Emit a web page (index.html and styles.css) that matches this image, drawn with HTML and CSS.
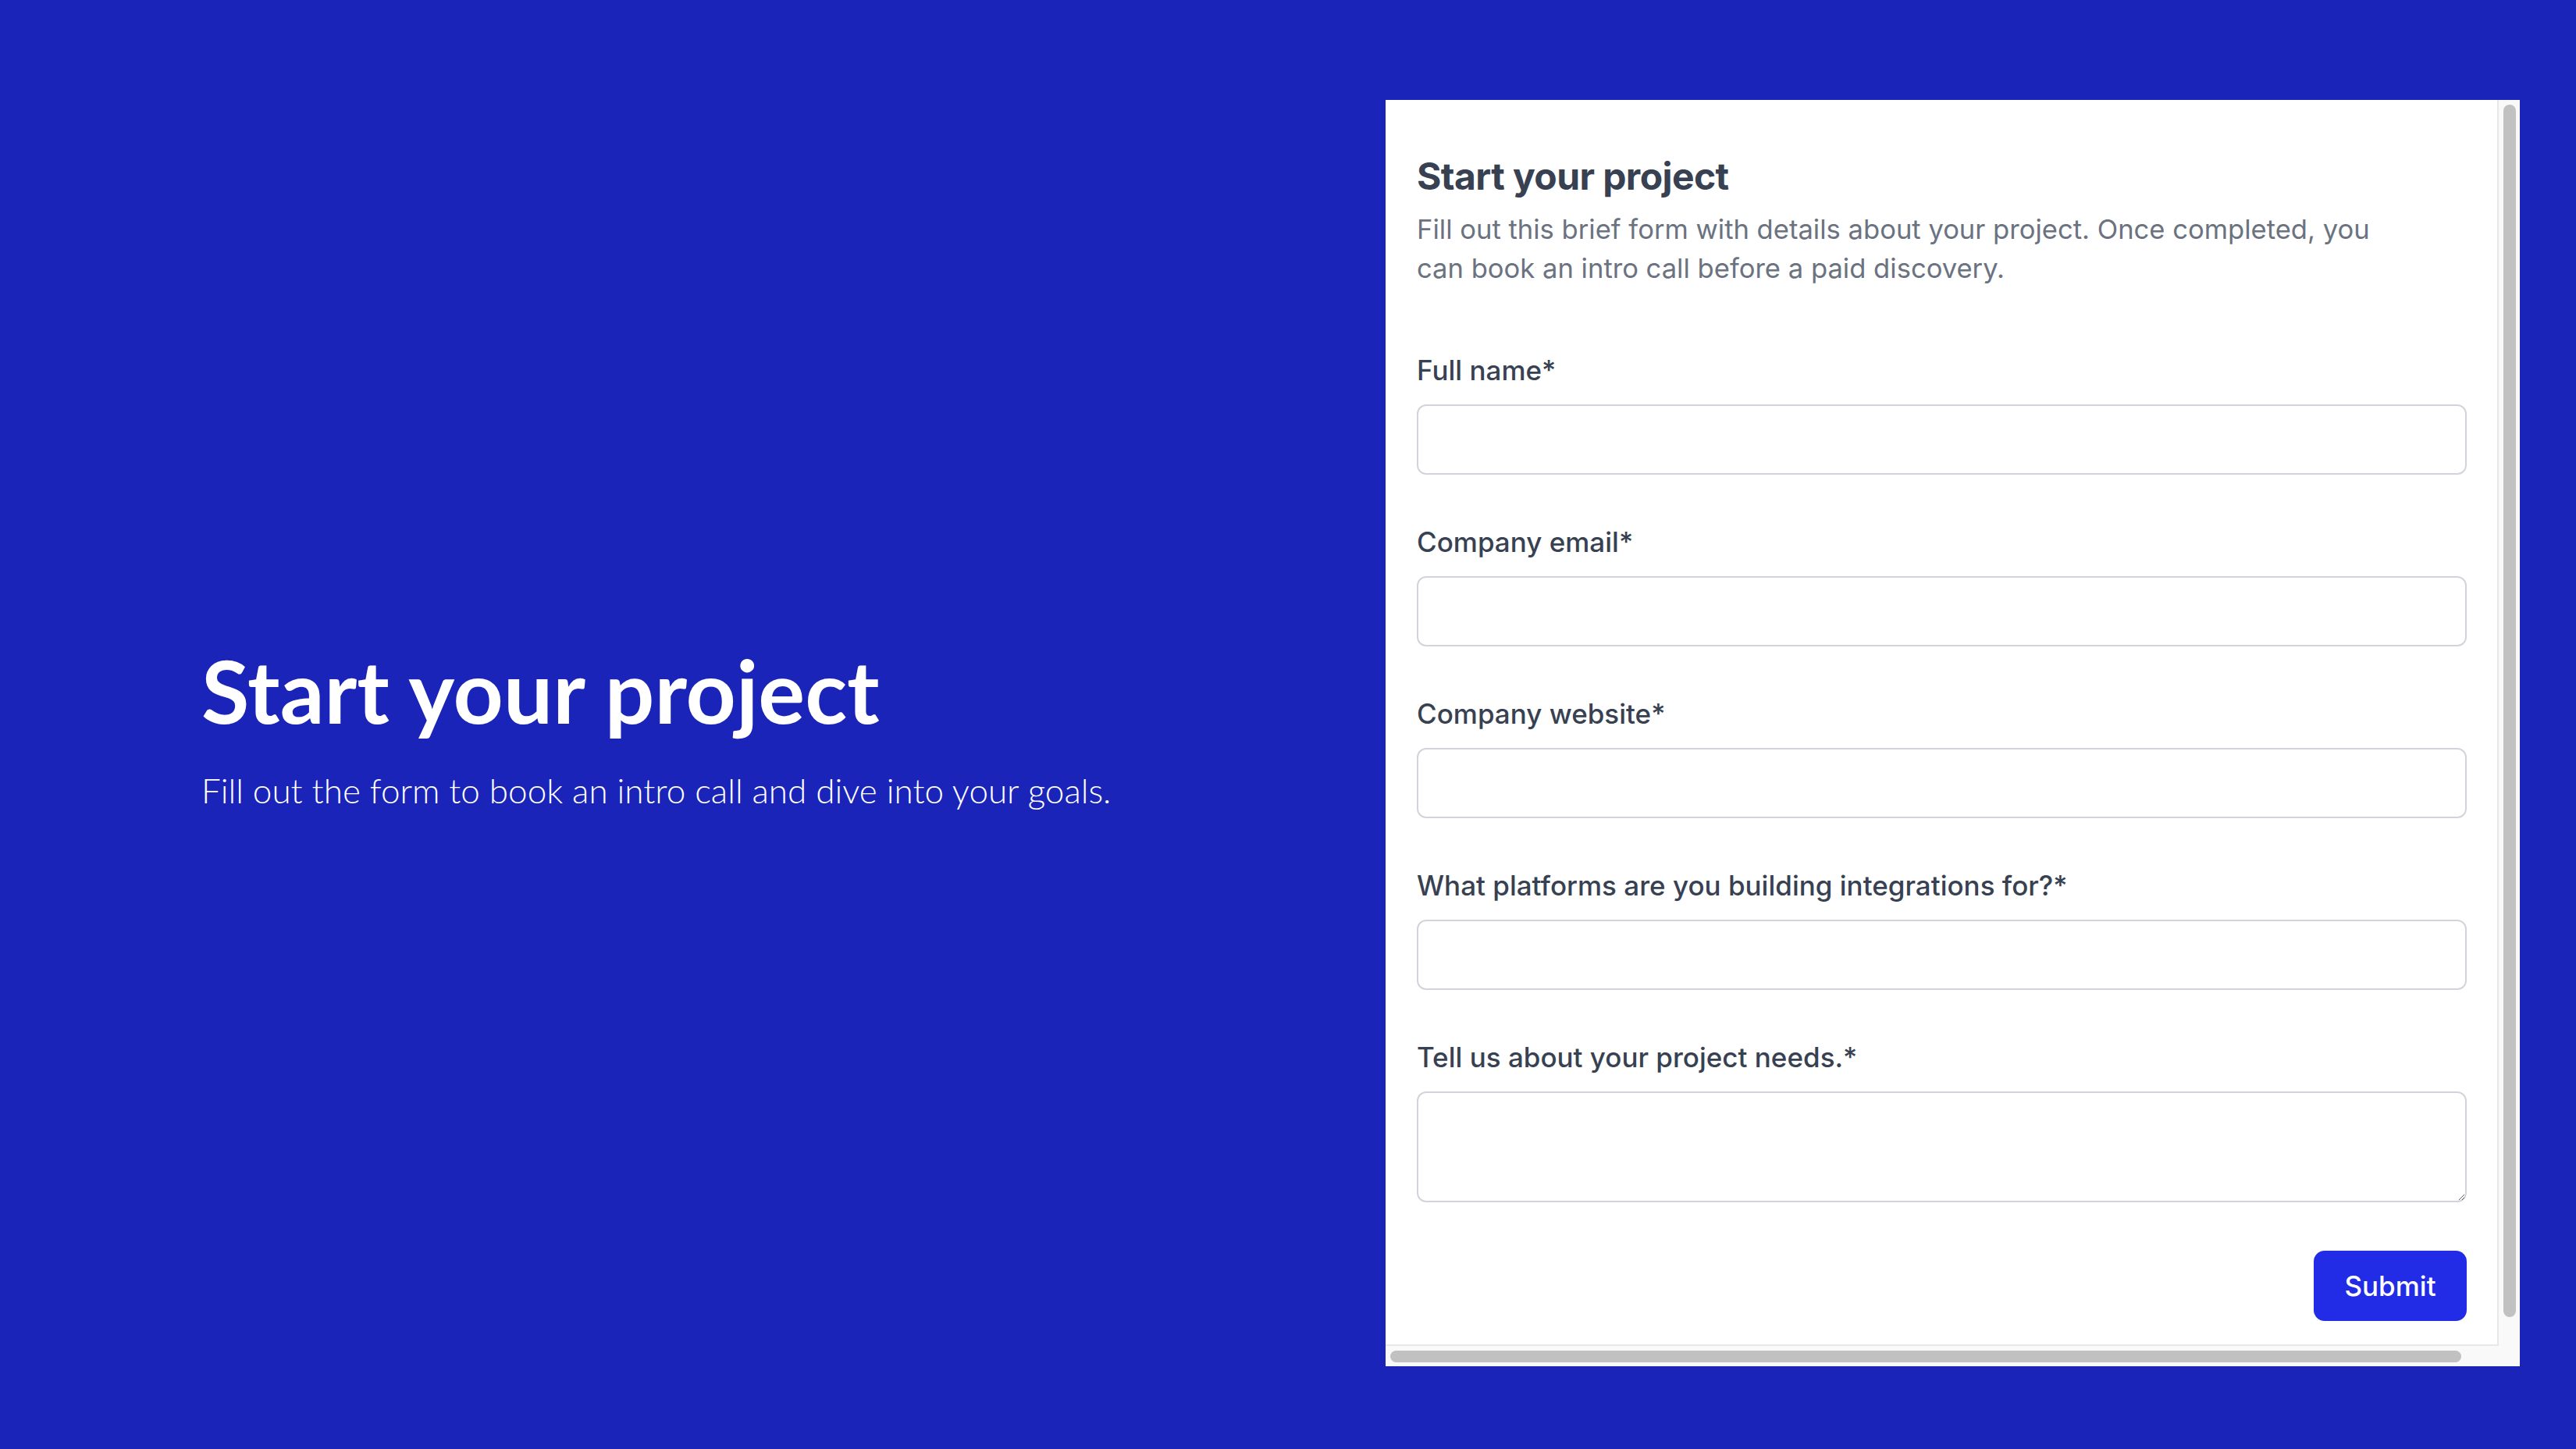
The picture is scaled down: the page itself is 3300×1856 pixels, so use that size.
FILE: index.html
```html
<!DOCTYPE html>
<html lang="en">
<head>
    <meta name="viewport" content="width=device-width, initial-scale=1.0">
    <title>Start your project</title>
    <link rel="stylesheet" href="styles.css">
</head>
<body>
    <div class="page">
        <section class="intro">
            <h1>Start your project</h1>
            <p>Fill out the form to book an intro call and dive into your goals.</p>
        </section>

        <div class="frame">
            <div class="viewport">
                <div class="content">
                    <h2>Start your project</h2>
                    <p class="lead">Fill out this brief form with details about your project. Once completed, you can book an intro call before a paid discovery.</p>

                    <form class="project-form">
                        <div class="field">
                            <label for="name">Full name*</label>
                            <input type="text" id="name">
                        </div>
                        <div class="field">
                            <label for="email">Company email*</label>
                            <input type="email" id="email">
                        </div>
                        <div class="field">
                            <label for="website">Company website*</label>
                            <input type="text" id="website">
                        </div>
                        <div class="field">
                            <label for="platforms">What platforms are you building integrations for?*</label>
                            <input type="text" id="platforms">
                        </div>
                        <div class="field field-last">
                            <label for="needs">Tell us about your project needs.*</label>
                            <textarea id="needs"></textarea>
                        </div>
                        <div class="actions">
                            <button type="button">Submit</button>
                        </div>
                    </form>
                </div>
                <div class="vbar"><div class="thumb"></div></div>
            </div>
            <div class="hbar"><div class="thumb"></div></div>
        </div>
    </div>
</body>
</html>
```

FILE: styles.css
```css
body {
    margin: 0;
    background: #1a24b9;
    font-family: Inter, "Noto Sans", sans-serif;
}
.page {
    display: flex;
    height: 1856px;
    overflow: hidden;
}
.intro {
    flex: 1;
    display: flex;
    flex-direction: column;
    justify-content: center;
    padding-left: 258px;
    color: #fff;
    font-family: Lato, "Liberation Sans", sans-serif;
}
.intro h1 {
    margin: 0;
    font-size: 112px;
    font-weight: 700;
    line-height: 1.2;
}
.intro p {
    margin: 34px 0 0;
    font-size: 44px;
    font-weight: 300;
    line-height: 1.2;
}
.frame {
    width: 1453px;
    height: 1622px;
    margin: 128px 72px 0 0;
    background: #fff;
    display: flex;
    flex-direction: column;
}
.viewport {
    flex: 1;
    display: flex;
    min-height: 0;
}
.content {
    flex: 1;
    overflow: hidden;
    padding: 66px 39px 0 40px;
    border-right: 2px solid #e8e8e8;
    border-bottom: 2px solid #e8e8e8;
}
.content h2 {
    margin: 0;
    font-size: 48px;
    line-height: 64px;
    font-weight: 700;
    letter-spacing: -0.6px;
    color: #374151;
}
.lead {
    margin: 10px 0 0;
    max-width: 1250px;
    font-size: 34.6px;
    line-height: 50px;
    color: #6b7280;
}
.project-form {
    margin-top: 86px;
}
.field {
    margin-bottom: 66px;
}
.field-last {
    margin-bottom: 62px;
}
.field label {
    display: block;
    margin-bottom: 24px;
    font-size: 35px;
    line-height: 40px;
    font-weight: 500;
    color: #374151;
}
.field input,
.field textarea {
    display: block;
    box-sizing: border-box;
    width: 100%;
    height: 90px;
    margin: 0;
    border: 2px solid #d1d5db;
    border-radius: 12px;
    background: #fff;
    font: inherit;
}
.field textarea {
    height: 142px;
}
.actions {
    display: flex;
    justify-content: flex-end;
}
.actions button {
    width: 196px;
    height: 90px;
    border: 0;
    border-radius: 14px;
    background: #222be6;
    color: #fff;
    font: inherit;
    font-size: 35px;
    font-weight: 500;
}
.vbar {
    width: 27px;
    background: #f9f9f9;
}
.vbar .thumb {
    width: 16px;
    height: 1553px;
    margin: 6px 0 0 6px;
    border-radius: 8px;
    background: #c1c1c1;
}
.hbar {
    height: 26px;
    background: #f9f9f9;
}
.hbar .thumb {
    width: 1372px;
    height: 15px;
    margin: 6px 0 0 6px;
    border-radius: 8px;
    background: #c1c1c1;
}
```
